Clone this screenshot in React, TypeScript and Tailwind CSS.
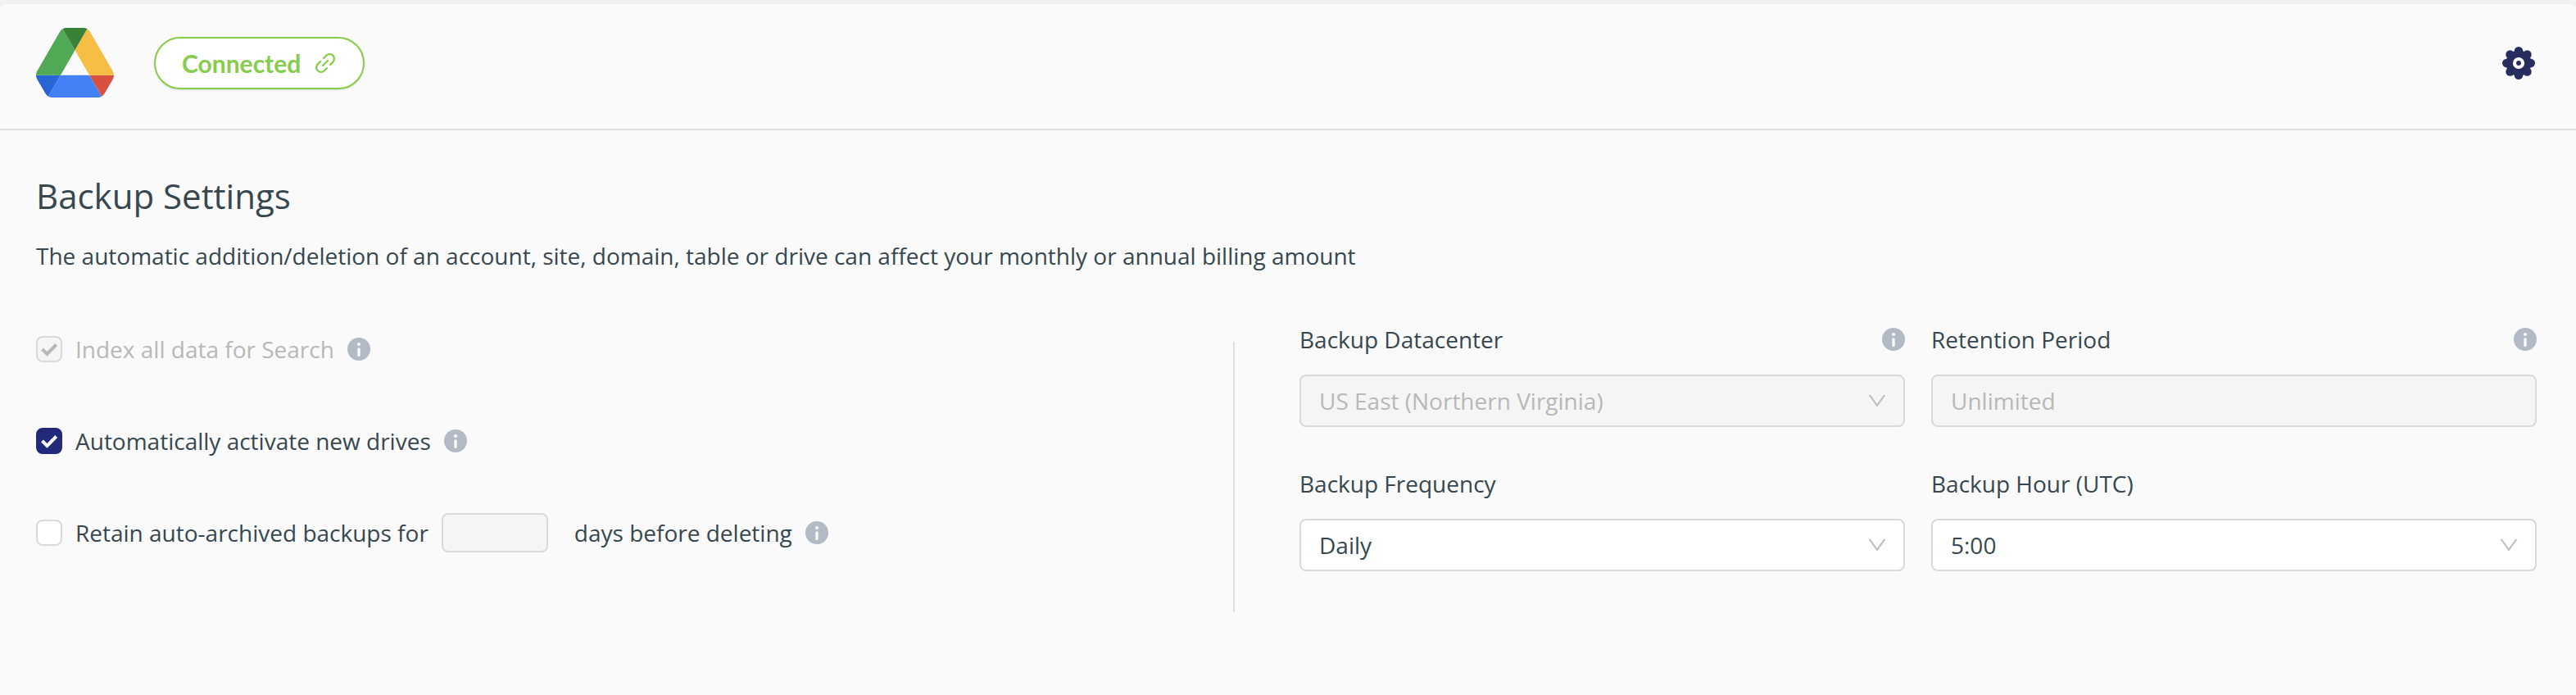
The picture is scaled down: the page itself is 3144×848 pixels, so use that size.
import React, { useState } from "react";
import { AiOutlineDown, AiOutlineLink } from "react-icons/ai";

interface CheckboxProps {
  id: string;
  checked: boolean;
  disabled?: boolean;
  onChange?: (checked: boolean) => void;
}

interface SelectFieldProps {
  id: string;
  label: string;
  value: string;
  options: string[];
  disabled?: boolean;
  info?: boolean;
  onChange?: (value: string) => void;
}

const frequencies = ["Daily", "3x per day"];
const hours = Array.from({ length: 24 }, (_, index) => `${index}:00`);
const lobes = [0, 45, 90, 135, 180, 225, 270, 315];

function DriveLogo() {
  return (
    <svg viewBox="0 0 87.3 78" className="h-[85px] w-[95px] shrink-0" role="img" aria-label="Google Drive">
      <path fill="#2865d5" d="m6.6 66.85 3.85 6.65c.8 1.4 1.95 2.5 3.3 3.3l13.75-23.8h-27.5c0 1.55.4 3.1 1.2 4.5z" />
      <path fill="#4fa955" d="m43.65 25-13.75-23.8c-1.35.8-2.5 1.9-3.3 3.3l-25.4 44a9.06 9.06 0 0 0 -1.2 4.5h27.5z" />
      <path fill="#d8503f" d="m73.55 76.8c1.35-.8 2.5-1.9 3.3-3.3l1.6-2.75 7.65-13.25c.8-1.4 1.2-2.95 1.2-4.5h-27.5z" />
      <path fill="#398137" d="m43.65 25 13.75-23.8c-1.35-.8-2.9-1.2-4.5-1.2h-18.5c-1.6 0-3.15.45-4.5 1.2z" />
      <path fill="#4382f4" d="m59.8 53h-32.3l-13.75 23.8c1.35.8 2.9 1.2 4.5 1.2h50.8c1.6 0 3.15-.45 4.5-1.2z" />
      <path fill="#f6be44" d="m73.4 26.5-12.7-22c-.8-1.4-1.95-2.5-3.3-3.3l-13.75 23.8 16.15 28h27.45c0-1.55-.4-3.1-1.2-4.5z" />
    </svg>
  );
}

function GearIcon() {
  return (
    <svg viewBox="0 0 40 40" className="size-10">
      <g fill="#272d5f">
        <circle cx="20" cy="20" r="15.6" />
        {lobes.map((angle) => (
          <circle key={angle} cx="20" cy="5.3" r="5.3" transform={`rotate(${angle} 20 20)`} />
        ))}
      </g>
      <circle cx="20" cy="20" r="5" fill="none" stroke="#fff" strokeWidth="4.2" />
    </svg>
  );
}

function InfoIcon() {
  return (
    <svg viewBox="0 0 28 28" className="size-7 shrink-0" aria-hidden="true">
      <circle cx="14" cy="14" r="14" fill="#b2bac6" />
      <circle cx="14" cy="8" r="2.1" fill="#fafafa" />
      <path d="M14 14v7.6" stroke="#fafafa" strokeWidth="3.4" strokeLinecap="round" />
    </svg>
  );
}

function Checkbox({ id, checked, disabled, onChange }: CheckboxProps) {
  return (
    <span className="grid size-8 shrink-0 *:col-start-1 *:row-start-1">
      <input
        id={id}
        type="checkbox"
        checked={checked}
        disabled={disabled}
        onChange={(e) => onChange?.(e.target.checked)}
        className="size-8 appearance-none rounded-lg border-2 border-[#d9d9d9] bg-white checked:border-[#22297a] checked:bg-[#22297a] disabled:border-[#d9d9d9] disabled:bg-[#f5f5f5]"
      />
      {checked && (
        <svg
          viewBox="0 0 32 32"
          className={`pointer-events-none size-8 ${disabled ? "text-[#b8b8b8]" : "text-white"}`}
        >
          <path d="M7.5 16 13.5 22 24.7 10.5" fill="none" stroke="currentColor" strokeWidth="4" />
        </svg>
      )}
    </span>
  );
}

function SelectField({ id, label, value, options, disabled, info, onChange }: SelectFieldProps) {
  return (
    <div className="flex flex-col gap-6">
      <div className="flex items-center justify-between">
        <label htmlFor={id}>{label}</label>
        {info && <InfoIcon />}
      </div>
      <div className="grid items-center *:col-start-1 *:row-start-1">
        <select
          id={id}
          value={value}
          disabled={disabled}
          onChange={(e) => onChange?.(e.target.value)}
          className="h-16 w-full appearance-none rounded-lg border-2 border-[#d9d9d9] bg-white px-[22px] disabled:bg-[#f5f5f5] disabled:text-[#b8b8b8] disabled:opacity-100"
        >
          {options.map((option) => (
            <option key={option}>{option}</option>
          ))}
        </select>
        <AiOutlineDown className="pointer-events-none mr-5 size-7 justify-self-end text-[#bfbfbf]" />
      </div>
    </div>
  );
}

export default function App() {
  const [autoActivate, setAutoActivate] = useState(true);
  const [retain, setRetain] = useState(false);
  const [days, setDays] = useState("");
  const [frequency, setFrequency] = useState("Daily");
  const [hour, setHour] = useState("5:00");

  return (
    <div className="min-h-screen bg-[#f0f2f2] pt-[5px] font-['Open_Sans',sans-serif] text-[28px] leading-[38px] text-[#37474f]">
      <div className="min-h-[calc(100vh-5px)] rounded-t-lg bg-[#fafafa]">
        <header className="flex items-center border-b-2 border-[#dadfe3] pt-[29px] pr-[50px] pb-[38px] pl-11">
          <DriveLogo />
          <button
            type="button"
            className="ml-[49px] flex h-16 items-center gap-[14px] rounded-full border-2 border-[#87cc4d] bg-white pr-[30px] pl-8 font-['Lato',sans-serif] text-[30px] font-bold text-[#87cc4d] shadow-sm"
          >
            Connected
            <AiOutlineLink className="size-8" />
          </button>
          <button type="button" aria-label="Settings" className="ml-auto">
            <GearIcon />
          </button>
        </header>

        <main className="pt-[50px] pr-12 pb-16 pl-11">
          <h1 className="text-[42px] leading-[60px]">Backup Settings</h1>
          <p className="mt-6">
            The automatic addition/deletion of an account, site, domain, table or drive can affect your monthly or
            annual billing amount
          </p>

          <div className="mt-16 grid grid-cols-2">
            <div className="flex pr-[63px]">
              <div className="flex flex-1 flex-col gap-16 pt-[7px]">
                <div className="flex h-12 items-center gap-4">
                  <Checkbox id="index-data" checked disabled />
                  <label htmlFor="index-data" className="text-[#b8b8b8]">
                    Index all data for Search
                  </label>
                  <InfoIcon />
                </div>
                <div className="flex h-12 items-center gap-4">
                  <Checkbox id="auto-activate" checked={autoActivate} onChange={setAutoActivate} />
                  <label htmlFor="auto-activate">Automatically activate new drives</label>
                  <InfoIcon />
                </div>
                <div className="flex h-12 items-center gap-4">
                  <Checkbox id="retain" checked={retain} onChange={setRetain} />
                  <label htmlFor="retain">Retain auto-archived backups for</label>
                  <input
                    id="retain-days"
                    type="text"
                    value={days}
                    disabled={!retain}
                    onChange={(e) => setDays(e.target.value)}
                    className="mr-4 h-12 w-[130px] rounded-lg border-2 border-[#d9d9d9] bg-white px-4 disabled:bg-[#f5f5f5]"
                  />
                  <label htmlFor="retain-days">days before deleting</label>
                  <InfoIcon />
                </div>
              </div>
              <div className="mt-[22px] h-[330px] w-0.5 bg-[#dadfe8]" />
            </div>

            <div className="grid grid-cols-2 content-start gap-x-8 gap-y-[50px] pl-4">
              <SelectField
                id="datacenter"
                label="Backup Datacenter"
                value="US East (Northern Virginia)"
                options={["US East (Northern Virginia)"]}
                disabled
                info
              />
              <div className="flex flex-col gap-6">
                <div className="flex items-center justify-between">
                  <label htmlFor="retention">Retention Period</label>
                  <InfoIcon />
                </div>
                <input
                  id="retention"
                  type="text"
                  value="Unlimited"
                  disabled
                  className="h-16 w-full rounded-lg border-2 border-[#d9d9d9] bg-[#f5f5f5] px-[22px] text-[#b8b8b8]"
                />
              </div>
              <SelectField
                id="frequency"
                label="Backup Frequency"
                value={frequency}
                options={frequencies}
                onChange={setFrequency}
              />
              <SelectField id="hour" label="Backup Hour (UTC)" value={hour} options={hours} onChange={setHour} />
            </div>
          </div>
        </main>
      </div>
    </div>
  );
}
